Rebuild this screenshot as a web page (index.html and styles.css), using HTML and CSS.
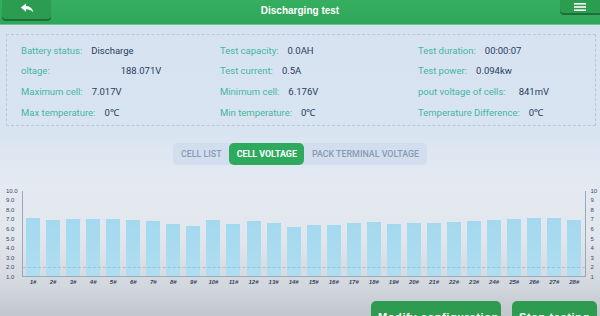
FILE: index.html
```html
<!DOCTYPE html>
<html>
<head>
<meta charset="utf-8">
<link rel="stylesheet" href="styles.css">
</head>
<body>
<header class="topbar">
  <button class="back" aria-label="Back">
    <svg width="14" height="10" viewBox="0 0 14 10"><path d="M6 0.5 L0.8 4.6 L6 8.7 V6.2 C9 6.2 11.5 7 13.4 9.3 C12.6 5.6 10.3 3.2 6 2.9 Z" fill="#fff"/></svg>
  </button>
  <h1 class="title">Discharging test</h1>
  <button class="menu" aria-label="Menu">
    <svg width="12" height="8" viewBox="0 0 12 8"><rect x="0" y="0" width="12" height="1.6" fill="#fff"/><rect x="0" y="3.2" width="12" height="1.6" fill="#fff"/><rect x="0" y="6.4" width="12" height="1.6" fill="#fff"/></svg>
  </button>
</header>

<section class="info">
  <div class="cell"><span class="lbl">Battery status:</span><span class="val">Discharge</span></div>
  <div class="cell"><span class="lbl">Test capacity:</span><span class="val">0.0AH</span></div>
  <div class="cell"><span class="lbl">Test duration:</span><span class="val">00:00:07</span></div>

  <div class="cell"><span class="lbl">oltage:</span><span class="val far">188.071V</span></div>
  <div class="cell"><span class="lbl">Test current:</span><span class="val">0.5A</span></div>
  <div class="cell"><span class="lbl">Test power:</span><span class="val">0.094kw</span></div>

  <div class="cell"><span class="lbl">Maximum cell:</span><span class="val">7.017V</span></div>
  <div class="cell"><span class="lbl">Minimum cell:</span><span class="val">6.176V</span></div>
  <div class="cell"><span class="lbl">pout voltage of cells:</span><span class="val wide">841mV</span></div>

  <div class="cell"><span class="lbl">Max temperature:</span><span class="val">0℃</span></div>
  <div class="cell"><span class="lbl">Min temperature:</span><span class="val">0℃</span></div>
  <div class="cell"><span class="lbl">Temperature Difference:</span><span class="val">0℃</span></div>
</section>

<nav class="tabs-wrap">
  <div class="tabs">
    <span class="tab">CELL LIST</span>
    <span class="tab active">CELL VOLTAGE</span>
    <span class="tab">PACK TERMINAL VOLTAGE</span>
  </div>
</nav>

<section class="chart">
  <div class="yaxis left">
    <span>10.0</span><span>9.0</span><span>8.0</span><span>7.0</span><span>6.0</span><span>5.0</span><span>4.0</span><span>3.0</span><span>2.0</span><span>1.0</span>
  </div>
  <div class="plot-col">
    <div class="plot">
      <div class="refline"></div>
      <div class="slot"><div class="bar" style="height:57.7px"></div></div>
      <div class="slot"><div class="bar" style="height:56px"></div></div>
      <div class="slot"><div class="bar" style="height:56.7px"></div></div>
      <div class="slot"><div class="bar" style="height:57px"></div></div>
      <div class="slot"><div class="bar" style="height:57px"></div></div>
      <div class="slot"><div class="bar" style="height:56.3px"></div></div>
      <div class="slot"><div class="bar" style="height:54.7px"></div></div>
      <div class="slot"><div class="bar" style="height:51.7px"></div></div>
      <div class="slot"><div class="bar" style="height:50px"></div></div>
      <div class="slot"><div class="bar" style="height:55.7px"></div></div>
      <div class="slot"><div class="bar" style="height:51.7px"></div></div>
      <div class="slot"><div class="bar" style="height:54.7px"></div></div>
      <div class="slot"><div class="bar" style="height:52.7px"></div></div>
      <div class="slot"><div class="bar" style="height:49.3px"></div></div>
      <div class="slot"><div class="bar" style="height:51.3px"></div></div>
      <div class="slot"><div class="bar" style="height:51px"></div></div>
      <div class="slot"><div class="bar" style="height:53px"></div></div>
      <div class="slot"><div class="bar" style="height:54px"></div></div>
      <div class="slot"><div class="bar" style="height:52.3px"></div></div>
      <div class="slot"><div class="bar" style="height:53px"></div></div>
      <div class="slot"><div class="bar" style="height:53px"></div></div>
      <div class="slot"><div class="bar" style="height:54px"></div></div>
      <div class="slot"><div class="bar" style="height:55.3px"></div></div>
      <div class="slot"><div class="bar" style="height:56.3px"></div></div>
      <div class="slot"><div class="bar" style="height:56.7px"></div></div>
      <div class="slot"><div class="bar" style="height:57.7px"></div></div>
      <div class="slot"><div class="bar" style="height:57.7px"></div></div>
      <div class="slot"><div class="bar" style="height:56.3px"></div></div>
    </div>
    <div class="xlabels">
      <span>1#</span><span>2#</span><span>3#</span><span>4#</span><span>5#</span><span>6#</span><span>7#</span><span>8#</span><span>9#</span><span>10#</span><span>11#</span><span>12#</span><span>13#</span><span>14#</span><span>15#</span><span>16#</span><span>17#</span><span>18#</span><span>19#</span><span>20#</span><span>21#</span><span>22#</span><span>23#</span><span>24#</span><span>25#</span><span>26#</span><span>27#</span><span>28#</span>
    </div>
  </div>
  <div class="yaxis right">
    <span>10</span><span>9</span><span>8</span><span>7</span><span>6</span><span>5</span><span>4</span><span>3</span><span>2</span><span>1</span>
  </div>
</section>

<footer class="actions">
  <div class="btn btn-modify">Modify configuration</div>
  <div class="btn btn-stop">Stop testing</div>
</footer>
</body>
</html>
```

FILE: styles.css
```css
* { box-sizing: border-box; }

html, body {
  margin: 0;
  padding: 0;
}

body {
  width: 600px;
  height: 316px;
  overflow: hidden;
  font-family: Roboto, "Liberation Sans", sans-serif;
  background: linear-gradient(to bottom,
    #d6e2f0 0px,
    #d9e4f1 130px,
    #e4eaf2 185px,
    #e2e6ec 240px,
    #d3d7de 285px,
    #c2c6cd 316px);
  display: flex;
  flex-direction: column;
}

/* Header */
.topbar {
  height: 25px;
  flex: none;
  background: linear-gradient(to bottom, #35ae60, #2fa75a);
  display: grid;
  grid-template-columns: 1fr auto 1fr;
  align-items: start;
  border-bottom: 1px solid #6cc48a;
}

.back, .menu {
  border: none;
  padding: 0;
  display: flex;
  align-items: center;
  justify-content: center;
  background: #2c9c51;
  box-shadow: 0 2px 0 #1d6e37;
  border-radius: 0 0 4px 4px;
}

.back {
  justify-self: start;
  margin-left: 2px;
  width: 49px;
  height: 19px;
}

.back svg { margin-top: -3px; }

.menu {
  justify-self: end;
  width: 40px;
  height: 13px;
  border-radius: 0 0 0 4px;
}

.title {
  margin: 0;
  align-self: center;
  color: #fff;
  font-family: "Liberation Sans", Arial, sans-serif;
  font-weight: 700;
  font-size: 10px;
  line-height: 12px;
  margin-top: -2px;
}

/* Info panel */
.info {
  margin: 9px 4px 0 6px;
  height: 92px;
  border: 1px dashed #b9c7da;
  padding: 5px 0 0 14px;
  display: grid;
  grid-template-columns: 199px 198px 1fr;
  grid-auto-rows: 20.6px;
  align-items: center;
}

.cell {
  display: flex;
  align-items: baseline;
  gap: 9px;
  white-space: nowrap;
  font-size: 9.5px;
}

.lbl {
  color: #45b6a4;
}

.val {
  color: #2a3b62;
  font-weight: 400;
}

.val.far { margin-left: 62px; }
.val.wide { margin-left: 4px; }

/* Tabs */
.tabs-wrap {
  display: flex;
  justify-content: center;
  margin-top: 17px;
}

.tabs {
  display: flex;
  align-items: stretch;
  background: #d2deed;
  border-radius: 5px;
  height: 22px;
}

.tab {
  display: flex;
  align-items: center;
  padding: 0 7.5px;
  font-size: 8.9px;
  font-weight: 500;
  color: #8a9ab4;
  white-space: nowrap;
}

.tab.active {
  background: #2eaa5f;
  color: #fff;
  border-radius: 5px;
  font-weight: 700;
}

/* Chart */
.chart {
  display: flex;
  align-items: flex-start;
  margin-top: 22.7px;
  height: 100px;
  flex: none;
}

.yaxis {
  height: 92.4px;
  display: flex;
  flex-direction: column;
  justify-content: space-between;
  font-family: "Liberation Sans", Arial, sans-serif;
  font-size: 6px;
  line-height: 6px;
  color: #3c4a66;
}

.yaxis.left {
  width: 22px;
  padding-left: 6px;
}

.yaxis.right {
  padding-left: 5px;
}

.plot-col {
  margin-top: 3px;
  width: 563.5px;
}

.plot {
  position: relative;
  height: 86.4px;
  border-left: 1px solid #9aa8bc;
  border-right: 1px solid #9aa8bc;
  border-bottom: 1px solid #9aa8bc;
  display: flex;
  align-items: flex-end;
}

.refline {
  position: absolute;
  left: 0;
  right: 0;
  top: 76.4px;
  border-top: 1px dashed rgba(150, 165, 185, 0.55);
  z-index: 1;
}

.slot {
  flex: 1;
  display: flex;
  justify-content: center;
  align-items: flex-end;
  height: 100%;
}

.bar {
  width: 14px;
  background: linear-gradient(to bottom, #a3d9ef, #afdef0);
}

.xlabels {
  display: flex;
  margin-top: 2px;
  padding: 0 1px;
}

.xlabels span {
  flex: 1;
  text-align: center;
  font-family: "Liberation Sans", Arial, sans-serif;
  font-size: 6px;
  line-height: 7px;
  font-style: italic;
  font-weight: 700;
  color: #34456a;
}

/* Actions */
.actions {
  display: flex;
  justify-content: flex-end;
  align-items: flex-start;
  gap: 11px;
  padding-right: 3px;
  margin-top: auto;
  height: 15px;
  flex: none;
}

.btn {
  flex: none;
  border-radius: 5px;
  background: #2e9c50;
  color: #fff;
  font-family: "Liberation Sans", Arial, sans-serif;
  font-weight: 700;
  font-size: 11px;
  line-height: 13px;
  letter-spacing: 0.6px;
  padding: 10px 0 10px 7px;
  white-space: nowrap;
  overflow: hidden;
}

.btn-modify { width: 130px; }
.btn-stop { width: 85px; }
```
